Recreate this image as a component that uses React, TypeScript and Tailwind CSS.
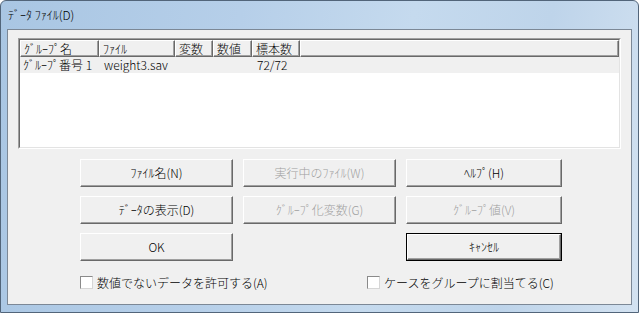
import React from 'react'

const font = { fontFamily: '"Noto Sans CJK JP", "Noto Sans", sans-serif' }

function Btn({ label, disabled, isDefault }: { label: string; disabled?: boolean; isDefault?: boolean }) {
  return (
    <div className={isDefault ? 'border border-black' : ''}>
      <div
        className={`flex items-center justify-center bg-[#f0f0f0] border-t border-l border-t-white border-l-white border-r border-b border-r-[#696969] border-b-[#696969] shadow-[inset_-1px_-1px_0_#a0a0a0] text-[12px] leading-none ${
          isDefault ? 'h-[26px]' : 'h-[28px]'
        } ${disabled ? 'text-[#a0a0a0]' : 'text-black'}`}
      >
        {label}
      </div>
    </div>
  )
}

function Check({ label }: { label: string }) {
  return (
    <div className="flex items-center gap-[4px] text-[12px] leading-none text-black">
      <span className="w-[13px] h-[13px] bg-white border border-t-[#8a8a8a] border-l-[#8a8a8a] border-r-[#d6d6d6] border-b-[#d6d6d6]" />
      <span>{label}</span>
    </div>
  )
}

const cols = [
  { label: 'ｸﾞﾙｰﾌﾟ名', w: 'w-[79px]' },
  { label: 'ﾌｧｲﾙ', w: 'w-[76px]' },
  { label: '変数', w: 'w-[38px]' },
  { label: '数値', w: 'w-[39px]' },
  { label: '標本数', w: 'w-[48px]' },
]

export default function App() {
  return (
    <div className="w-[639px] h-[313px] overflow-hidden font-light" style={font}>
      <div className="w-full h-full flex flex-col rounded-t-[6px] border border-[#52657a] bg-[linear-gradient(100deg,#a9c6e3_0%,#b6cfe9_35%,#c5daee_60%,#bed4ea_80%,#d3e2f1_100%)]">
        {/* title bar */}
        <div className="h-[28px] shrink-0 flex items-center pl-[7px] text-[12px] leading-none text-black">
          ﾃﾞｰﾀ ﾌｧｲﾙ(D)
        </div>
        {/* client */}
        <div className="mx-[6px] h-[276px] border border-[#7c8896] bg-[#f0f0f0] flex flex-col">
          {/* list box */}
          <div className="ml-[10px] mt-[8px] w-[603px] h-[111px] border border-t-[#a0a0a0] border-l-[#a0a0a0] border-r-white border-b-white">
            <div className="w-full h-full flex flex-col border border-t-[#696969] border-l-[#696969] border-r-[#e3e3e3] border-b-[#e3e3e3] bg-white">
              <div className="h-[17px] shrink-0 flex bg-[#f0f0f0] text-[12px] leading-none text-black">
                {cols.map((c) => (
                  <div
                    key={c.label}
                    className={`${c.w} shrink-0 flex items-center pl-[3px] border-t border-l border-t-white border-l-white border-r border-b border-r-[#696969] border-b-[#696969] shadow-[inset_-1px_-1px_0_#a0a0a0]`}
                  >
                    {c.label}
                  </div>
                ))}
                <div className="flex-1 border-t border-l border-t-white border-l-white border-r border-b border-r-[#696969] border-b-[#696969] shadow-[inset_-1px_-1px_0_#a0a0a0]" />
              </div>
              <div className="h-[16px] shrink-0 flex items-center bg-[#f0f0f0] text-[12px] leading-none text-black">
                <span className="w-[84px] pl-[3px] shrink-0">ｸﾞﾙｰﾌﾟ番号 1</span>
                <span className="w-[153px] shrink-0">weight3.sav</span>
                <span>72/72</span>
              </div>
            </div>
          </div>
          {/* buttons */}
          <div className="ml-[72px] mt-[10px] grid grid-cols-[153px_153px_156px] gap-x-[10px] gap-y-[9px]">
            <Btn label="ﾌｧｲﾙ名(N)" />
            <Btn label="実行中のﾌｧｲﾙ(W)" disabled />
            <Btn label="ﾍﾙﾌﾟ(H)" />
            <Btn label="ﾃﾞｰﾀの表示(D)" />
            <Btn label="ｸﾞﾙｰﾌﾟ化変数(G)" disabled />
            <Btn label="ｸﾞﾙｰﾌﾟ値(V)" disabled />
            <Btn label="OK" />
            <div />
            <Btn label="ｷｬﾝｾﾙ" isDefault />
          </div>
          {/* checkboxes */}
          <div className="ml-[72px] mt-[15px] flex">
            <div className="w-[287px]">
              <Check label="数値でないデータを許可する(A)" />
            </div>
            <Check label="ケースをグループに割当てる(C)" />
          </div>
        </div>
      </div>
    </div>
  )
}
